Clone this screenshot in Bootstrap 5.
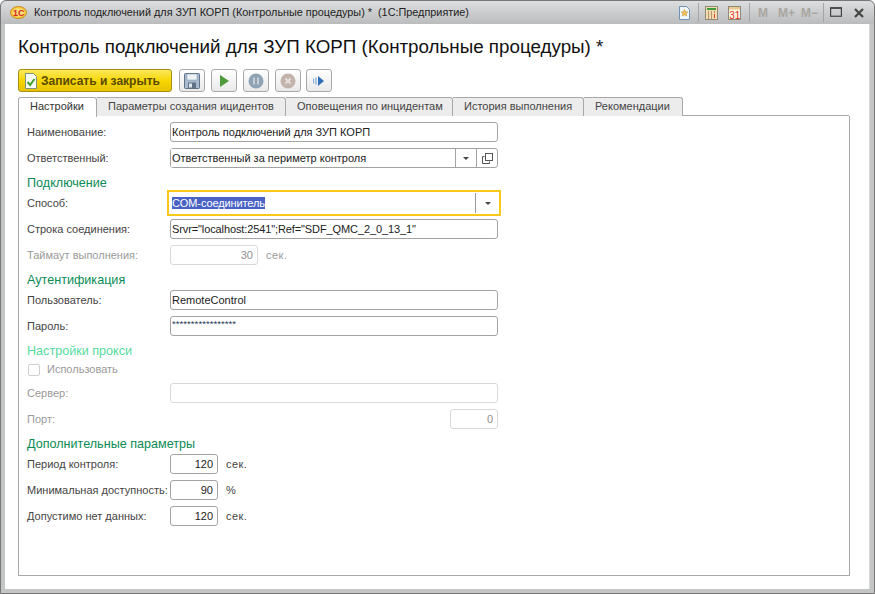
<!DOCTYPE html>
<html lang="ru">
<head>
    <meta charset="UTF-8">
    <title>Контроль подключений для ЗУП КОРП</title>
    <link href="https://cdn.jsdelivr.net/npm/bootstrap@5.3.0/dist/css/bootstrap.min.css" rel="stylesheet">
    <style>
        html, body {
            height: 594px;
            overflow: hidden;
        }
        body {
            font-family: "Liberation Sans", Arial, sans-serif;
            font-size: 11px;
            color: #444;
            background: #fff;
        }
        .app-window {
            width: 875px;
            height: 594px;
            background: #c4c6c6;
            border: 1px solid #777;
            border-radius: 6px 6px 0 0;
            padding: 0 4px 4px;
        }
        .title-bar {
            height: 23px;
            margin: 0 -4px;
            padding: 0 10px 0 9px;
            background: linear-gradient(#dcdedf, #b9bbbc);
            border-radius: 6px 6px 0 0;
            color: #222;
            line-height: 1;
        }
        .title-text {
            margin-left: 7px;
            font-size: 10.85px;
            white-space: nowrap;
        }
        .title-sep {
            width: 1px;
            height: 19px;
            background: #a4a6a6;
        }
        .mem-btn {
            font-weight: 700;
            font-size: 12px;
            color: #a9a6a1;
        }
        .form-area {
            height: 565px;
            background: #fff;
            padding: 0 20px 14px 13px;
            border-right: 1px solid #d8d8d8;
        }
        .form-heading {
            font-size: 18.8px;
            font-weight: 400;
            line-height: 22px;
            color: #111;
            margin: 0;
            padding-top: 12px;
            height: 45px;
            white-space: nowrap;
        }
        .tool-row {
            height: 23px;
            gap: 6px;
        }
        .btn.btn-save {
            width: 154px;
            height: 23px;
            margin-right: 1px;
            padding: 0 0 0 5px;
            gap: 3px;
            font-size: 12px;
            font-weight: 700;
            color: #5a4a00;
            background: linear-gradient(#fbe85a, #f6d500 55%, #e8c200);
            border: 1px solid #a98f12;
            border-radius: 3px;
        }
        .btn.btn-tool {
            width: 26px;
            height: 23px;
            padding: 0;
            background: linear-gradient(#fff, #e9e9e9);
            border: 1px solid #a9a9a9;
            border-radius: 3px;
        }
        .btn-tool.btn-wide { margin-left: -1px; }
        .form-tabs {
            margin-top: 5px;
            height: 19px;
            border-bottom: 1px solid #a9a9a9;
            flex-wrap: nowrap;
        }
        .form-tabs .nav-link {
            height: 19px;
            padding: 0 0 0 11px;
            font-size: 11px;
            line-height: 17px;
            color: #444;
            background: #ececec;
            border: 1px solid #a9a9a9;
            border-left: 0;
            border-bottom: 0;
            border-radius: 0 3px 0 0;
            margin: 0;
            white-space: nowrap;
        }
        .form-tabs .nav-link.active {
            height: 20px;
            color: #333;
            background: #fff;
            border-left: 1px solid #a9a9a9;
            border-radius: 3px 3px 0 0;
        }
        .tab-page {
            width: 832px;
            height: 460px;
            padding: 6px 8px 0 8px;
            border: 1px solid #a9a9a9;
            border-top: 0;
            background: #fff;
        }
        .field-row {
            height: 20px;
            margin-bottom: 6px;
        }
        .field-label {
            width: 143px;
            flex: none;
            white-space: nowrap;
        }
        .field-label.is-off, .field-unit.is-off { color: #9a9a9a; }
        .field-input.form-control {
            height: 20px;
            min-height: 0;
            padding: 0 2px 0 1px;
            font-size: 11px;
            color: #222;
            border: 1px solid #a3a3a3;
            border-radius: 3px;
            box-shadow: none;
            background: #fff;
        }
        .field-input.form-control:focus { box-shadow: none; border-color: #a3a3a3; }
        .field-input.form-control:disabled {
            background: #fff;
            border-color: #d9d9d9;
            color: #8f8f8f;
        }
        .field-input.text-tight { letter-spacing: -.11px; }
        .w-full { width: 328px; flex: none; }
        .w-num { width: 48px; flex: none; text-align: right; padding-right: 4px !important; }
        .w-timeout { width: 88px; flex: none; text-align: right; padding-right: 4px !important; }
        .w-port { width: 48px; flex: none; text-align: right; padding-right: 4px !important; margin-left: 280px; }
        .field-unit { margin: 1px 0 0 8px; letter-spacing: .4px; }
        .combo-box {
            width: 328px;
            height: 20px;
            flex: none;
            border: 1px solid #a3a3a3;
            border-radius: 3px;
        }
        .combo-box .field-input.form-control {
            height: 18px;
            border: 0;
            border-radius: 0;
            flex: 1 1 auto;
            width: 1%;
        }
        .combo-btn {
            width: 21px;
            flex: none;
            border-left: 1px solid #a3a3a3;
        }
        .caret-down {
            width: 0;
            height: 0;
            border-left: 3px solid transparent;
            border-right: 3px solid transparent;
            border-top: 3px solid #444;
        }
        .combo-focus {
            width: 334px;
            height: 26px;
            margin: -3px 0 -3px -3px;
            border: 2px solid #f8c81a;
            border-radius: 0;
            padding: 1px 0 1px 2px;
        }
        .combo-focus .field-input.form-control { height: 20px; }
        .combo-focus .combo-btn { height: 20px; width: 24px; border-left-color: #999; }
        .combo-focus input::selection { background: #4a62c4; color: #fff; }
        .group-title {
            height: 17px;
            padding-top: 1px;
            line-height: 17px;
            font-size: 12.6px;
            color: #0b8a55;
            margin: 0 0 2px;
        }
        .group-title.is-off { color: #55dba0; }
        .proxy-check {
            height: 17px;
            padding-left: 1px;
            margin-bottom: 5px;
            color: #9a9a9a;
        }
        .proxy-check .form-check-input {
            width: 12px;
            height: 12px;
            margin: 0 7px 0 0;
            border-color: #cfcfcf;
            border-radius: 2px;
            opacity: 1;
        }
        .pwd-text.form-control {
            font-size: 9.7px;
            padding-bottom: 6px;
            color: #2a3a5a;
        }
    </style>
</head>
<body>
    <div class="app-window d-flex flex-column">
        <div class="title-bar d-flex align-items-center">
            <svg width="17" height="13" viewBox="0 0 17 13">
                <ellipse cx="8.5" cy="6.5" rx="8" ry="6" fill="#f6c93a" stroke="#c98a1e"/>
                <ellipse cx="8.5" cy="6.5" rx="6" ry="4.2" fill="#f9dc7a"/>
                <text x="3" y="10" font-size="9" font-weight="700" fill="#d6261c" font-family="Liberation Sans">1С</text>
            </svg>
            <span class="title-text">Контроль подключений для ЗУП КОРП (Контрольные процедуры) *&nbsp; (1С:Предприятие)</span>
            <div class="ms-auto d-flex align-items-center">
                <svg width="13" height="14" viewBox="0 0 13 14">
                    <path d="M1.5.5h7l3 3v10h-10z" fill="#f2f7fb" stroke="#6f93b5"/>
                    <path d="M6.5 3.5l1 2.3 2.4.2-1.8 1.6.6 2.4-2.2-1.3-2.2 1.3.6-2.4-1.8-1.6 2.4-.2z" fill="#f3c452" stroke="#b8892c" stroke-width=".5"/>
                </svg>
                <span class="title-sep" style="margin:0 6px 0 7px"></span>
                <svg width="13" height="14" viewBox="0 0 13 14">
                    <rect x=".5" y=".5" width="12" height="13" fill="#f4dcae" stroke="#8f8a78"/>
                    <rect x="2" y="2" width="9" height="2" fill="#3f9a3c"/>
                    <path d="M3 6h1M6 6h1M9 6h1M3 8h1M6 8h1M3 10h1M6 10h1M3 12h1M6 12h1" stroke="#6a4a2a"/>
                    <path d="M9.5 8v4" stroke="#d6382c"/>
                </svg>
                <svg style="margin-left:10px" width="13" height="14" viewBox="0 0 13 14">
                    <rect x=".5" y=".5" width="12" height="13" fill="#fdf5e4" stroke="#8f8a78"/>
                    <rect x="1" y="1" width="11" height="2.5" fill="#e9c98f"/>
                    <text x="1.2" y="12.5" font-size="10" fill="#dd2c20" font-family="Liberation Sans">31</text>
                </svg>
                <span class="title-sep" style="margin:0 8px 0 8px"></span>
                <span class="mem-btn">М</span>
                <span class="mem-btn" style="margin-left:10px">М+</span>
                <span class="mem-btn" style="margin-left:6px">М−</span>
                <span class="title-sep" style="margin:0 6px 0 5px"></span>
                <svg width="12" height="11" viewBox="0 0 12 11">
                    <rect x=".6" y=".75" width="10.8" height="8.5" fill="none" stroke="#444" stroke-width="1.2"/>
                    <path d="M1 1.2h10" stroke="#444" stroke-width="1.4"/>
                </svg>
                <svg style="margin-left:12px" width="10" height="10" viewBox="0 0 10 10">
                    <path d="M1 1l8 8M9 1l-8 8" stroke="#444" stroke-width="2.2"/>
                </svg>
            </div>
        </div>

        <div class="form-area">
            <h1 class="form-heading">Контроль подключений для ЗУП КОРП (Контрольные процедуры) *</h1>

            <div class="tool-row d-flex">
                <button type="button" class="btn btn-save d-flex align-items-center">
                    <svg width="14" height="16" viewBox="0 0 14 16">
                        <path d="M1.5.5h8l3 3v12h-11z" fill="#f7fbf2" stroke="#7f8f80"/>
                        <path d="M3.5 9l2.6 3 4.4-6" fill="none" stroke="#3f9f2c" stroke-width="2"/>
                    </svg>
                    Записать и закрыть
                </button>
                <button type="button" class="btn btn-tool d-flex align-items-center justify-content-center" title="Записать">
                    <svg width="16" height="16" viewBox="0 0 16 16">
                        <rect x=".5" y=".5" width="15" height="15" rx="1" fill="#a9bccf" stroke="#5f7286"/>
                        <rect x="3" y="1" width="10" height="6" fill="#eef3f7" stroke="#7d8fa2" stroke-width=".5"/>
                        <rect x="4" y="9.5" width="8" height="6" fill="#5f7286"/>
                        <rect x="5" y="10.5" width="3" height="4" fill="#dfe6ec"/>
                    </svg>
                </button>
                <button type="button" class="btn btn-tool d-flex align-items-center justify-content-center" title="Старт">
                    <svg width="12" height="12" viewBox="0 0 12 12"><path d="M2 0l9 6-9 6z" fill="#4f9a3a"/></svg>
                </button>
                <button type="button" class="btn btn-tool d-flex align-items-center justify-content-center" title="Пауза">
                    <svg width="16" height="16" viewBox="0 0 16 16">
                        <circle cx="8" cy="8" r="7.5" fill="#8fa3b5"/>
                        <path d="M6 4.5v7M10 4.5v7" stroke="#c5d0da" stroke-width="2"/>
                    </svg>
                </button>
                <button type="button" class="btn btn-tool d-flex align-items-center justify-content-center" title="Стоп">
                    <svg width="16" height="16" viewBox="0 0 16 16">
                        <circle cx="8" cy="8" r="7.5" fill="#c2b3ad"/>
                        <path d="M5.5 5.5l5 5M10.5 5.5l-5 5" stroke="#e6dfdb" stroke-width="2"/>
                    </svg>
                </button>
                <button type="button" class="btn btn-tool btn-wide d-flex align-items-center justify-content-center" title="Далее">
                    <svg width="12" height="12" viewBox="0 0 12 12">
                        <path d="M.5 3.5v5M3 2.5v7" stroke="#8fb0d8" stroke-width="1.4"/>
                        <path d="M5 1l6 5-6 5z" fill="#2f6fb5"/>
                    </svg>
                </button>
            </div>

            <ul class="nav form-tabs">
                <li class="nav-item"><a class="nav-link active" style="width:79px" href="#">Настройки</a></li>
                <li class="nav-item"><a class="nav-link" style="width:189px" href="#">Параметры создания ицидентов</a></li>
                <li class="nav-item"><a class="nav-link" style="width:167px" href="#">Оповещения по инцидентам</a></li>
                <li class="nav-item"><a class="nav-link" style="width:131px" href="#">История выполнения</a></li>
                <li class="nav-item"><a class="nav-link" style="width:99px" href="#">Рекомендации</a></li>
            </ul>

            <div class="tab-page">
                <div class="field-row d-flex align-items-center">
                    <label class="field-label">Наименование:</label>
                    <input class="form-control field-input w-full" value="Контроль подключений для ЗУП КОРП">
                </div>
                <div class="field-row d-flex align-items-center">
                    <label class="field-label">Ответственный:</label>
                    <div class="combo-box d-flex">
                        <input class="form-control field-input" value="Ответственный за периметр контроля">
                        <span class="combo-btn d-flex align-items-center justify-content-center"><span class="caret-down"></span></span>
                        <span class="combo-btn d-flex align-items-center justify-content-center">
                            <svg width="11" height="11" viewBox="0 0 11 11">
                                <rect x="3.5" y=".5" width="7" height="7" fill="none" stroke="#555"/>
                                <path d="M2.5 3.5H.5v7h7V8.5" fill="none" stroke="#555"/>
                            </svg>
                        </span>
                    </div>
                </div>

                <div class="group-title">Подключение</div>
                <div class="field-row d-flex align-items-center">
                    <label class="field-label">Способ:</label>
                    <div class="combo-box combo-focus d-flex">
                        <input id="methodInput" class="form-control field-input text-tight" value="COM-соединитель">
                        <span class="combo-btn d-flex align-items-center justify-content-center"><span class="caret-down"></span></span>
                    </div>
                </div>
                <div class="field-row d-flex align-items-center">
                    <label class="field-label">Строка соединения:</label>
                    <input class="form-control field-input text-tight w-full" value='Srvr="localhost:2541";Ref="SDF_QMC_2_0_13_1"'>
                </div>
                <div class="field-row d-flex align-items-center">
                    <label class="field-label is-off">Таймаут выполнения:</label>
                    <input class="form-control field-input w-timeout" value="30" disabled>
                    <span class="field-unit is-off">сек.</span>
                </div>

                <div class="group-title">Аутентификация</div>
                <div class="field-row d-flex align-items-center">
                    <label class="field-label">Пользователь:</label>
                    <input class="form-control field-input w-full" value="RemoteControl">
                </div>
                <div class="field-row d-flex align-items-center">
                    <label class="field-label">Пароль:</label>
                    <input class="form-control field-input pwd-text w-full" value="*****************">
                </div>

                <div class="group-title is-off">Настройки прокси</div>
                <div class="proxy-check d-flex align-items-center">
                    <input class="form-check-input" type="checkbox" disabled>
                    <span>Использовать</span>
                </div>
                <div class="field-row d-flex align-items-center">
                    <label class="field-label is-off">Сервер:</label>
                    <input class="form-control field-input w-full" disabled>
                </div>
                <div class="field-row d-flex align-items-center">
                    <label class="field-label is-off">Порт:</label>
                    <input class="form-control field-input w-port" value="0" disabled>
                </div>

                <div class="group-title">Дополнительные параметры</div>
                <div class="field-row d-flex align-items-center">
                    <label class="field-label">Период контроля:</label>
                    <input class="form-control field-input w-num" value="120">
                    <span class="field-unit">сек.</span>
                </div>
                <div class="field-row d-flex align-items-center">
                    <label class="field-label">Минимальная доступность:</label>
                    <input class="form-control field-input w-num" value="90">
                    <span class="field-unit">%</span>
                </div>
                <div class="field-row d-flex align-items-center">
                    <label class="field-label">Допустимо нет данных:</label>
                    <input class="form-control field-input w-num" value="120">
                    <span class="field-unit">сек.</span>
                </div>
            </div>
        </div>
    </div>

    <script src="https://cdn.jsdelivr.net/npm/bootstrap@5.3.0/dist/js/bootstrap.bundle.min.js"></script>
    <script>
        // the method field is focused with its text selected
        const methodInput = document.getElementById('methodInput');
        methodInput.focus();
        methodInput.select();
    </script>
</body>
</html>
